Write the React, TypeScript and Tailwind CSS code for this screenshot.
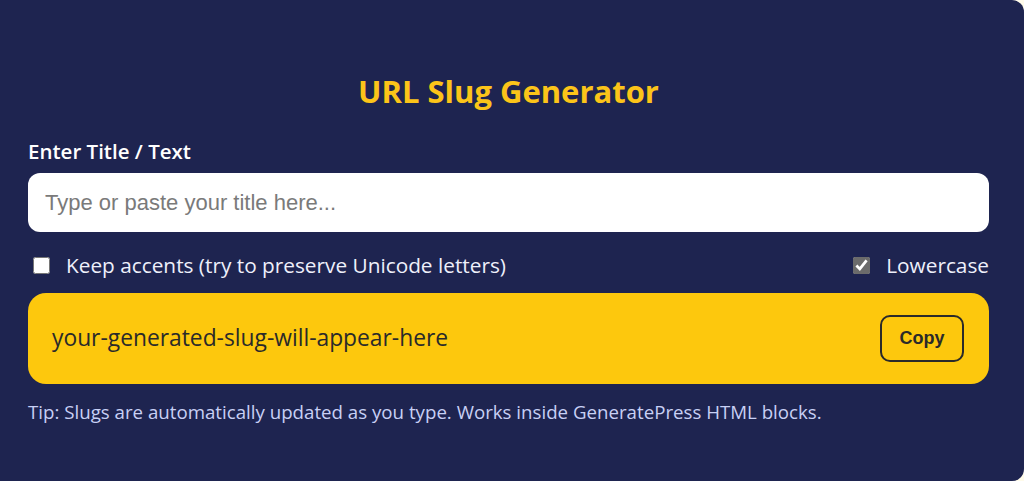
import React, { useState } from "react";

function slugify(text: string, keepAccents: boolean, lower: boolean) {
  let s = text;
  if (!keepAccents) s = s.normalize("NFD").replace(/[\u0300-\u036f]/g, "");
  if (lower) s = s.toLowerCase();
  s = s
    .replace(keepAccents ? /[^\p{L}\p{N}]+/gu : /[^A-Za-z0-9]+/g, "-")
    .replace(/^-+|-+$/g, "");
  return s;
}

export default function App() {
  const [text, setText] = useState("");
  const [keepAccents, setKeepAccents] = useState(false);
  const [lower, setLower] = useState(true);
  const slug = slugify(text, keepAccents, lower) || "your-generated-slug-will-appear-here";

  return (
    <div className="h-[481px] w-[1024px] overflow-hidden bg-[#fffbea]">
      <div
        className="flex h-full w-full flex-col rounded-tr-[12px] rounded-br-[12px] bg-[#1e2450] pl-[28px] pr-[35px] pt-[70px]"
        style={{ fontFamily: "'Open Sans', 'Noto Sans', sans-serif" }}
      >
        <h1 className="text-center text-[31px] font-bold leading-[42px] text-[#fcc419]">
          URL Slug Generator
        </h1>

        <label className="mt-[26px] text-[20.5px] font-semibold leading-[26px] text-white">
          Enter Title / Text
        </label>

        <input
          value={text}
          onChange={(e) => setText(e.target.value)}
          placeholder="Type or paste your title here..."
          className="mt-[9px] h-[59px] w-full rounded-[12px] bg-white px-[17px] text-[22px] text-[#222] outline-none placeholder:text-[#7a7a7a]"
          style={{ fontFamily: "'Liberation Sans', Arial, sans-serif" }}
        />

        <div className="mt-[20px] flex items-center justify-between text-[20.8px] leading-[26px] text-[#eef0fb]">
          <label className="flex items-center gap-[16px] pl-[5px]">
            <input
              type="checkbox"
              checked={keepAccents}
              onChange={(e) => setKeepAccents(e.target.checked)}
              className="h-[17px] w-[17px] accent-[#6b6b6b]"
            />
            Keep accents (try to preserve Unicode letters)
          </label>
          <label className="flex items-center gap-[16px]">
            <input
              type="checkbox"
              checked={lower}
              onChange={(e) => setLower(e.target.checked)}
              className="h-[17px] w-[17px] accent-[#6b6b6b]"
            />
            Lowercase
          </label>
        </div>

        <div className="mt-[15px] flex h-[91px] items-center justify-between rounded-[18px] bg-[#fdc80d] pl-[24px] pr-[25px]">
          <span className="text-[22.8px] font-medium text-[#2a2a2a]">{slug}</span>
          <button
            className="h-[47px] w-[84px] rounded-[10px] border-[2.5px] border-[#2a2a2a] text-[18px] font-bold text-[#2a2a2a]"
            style={{ fontFamily: "'Liberation Sans', Arial, sans-serif" }}
            onClick={() => navigator.clipboard?.writeText(slug)}
          >
            Copy
          </button>
        </div>

        <p className="mt-[16px] text-[18.7px] leading-[24px] text-[#c8d0f5]">
          Tip: Slugs are automatically updated as you type. Works inside GeneratePress HTML blocks.
        </p>
      </div>
    </div>
  );
}
